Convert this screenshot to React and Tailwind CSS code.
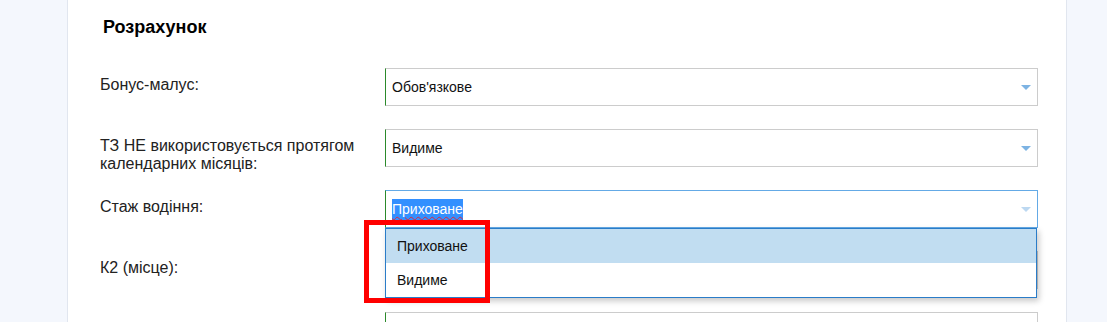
import React from 'react';

const Arrow = ({ light }) => (
  <svg width="10" height="5" viewBox="0 0 10 5" className="shrink-0">
    <path d="M0 0 H10 L5 5 Z" fill={light ? '#bcd8f1' : '#7db3e3'} />
  </svg>
);

const SelectBox = ({ value, focused, selected }) => (
  <div
    className={`flex h-[38px] w-[653px] shrink-0 items-center justify-between border border-l-[#2b8a2b] pl-[6px] pr-[6px] text-[14px] text-[#111] ${
      focused ? 'border-[#64aae6]' : 'border-[#cccccc]'
    }`}
  >
    {selected ? (
      <span className="bg-[#3390ff] text-white underline decoration-wavy decoration-[#e0283a] decoration-1 underline-offset-2">
        {value}
      </span>
    ) : (
      <span>{value}</span>
    )}
    <Arrow light={focused} />
  </div>
);

const Row = ({ label, children }) => (
  <div className="flex h-[61px] items-start">
    <div className="w-[285px] shrink-0 pt-[8px] pr-4 text-[16px] leading-[18px] text-[#222]">{label}</div>
    {children}
  </div>
);

export default function App() {
  const rows = [
    { label: 'Бонус-малус:', value: "Обов'язкове" },
    { label: 'ТЗ НЕ використовується протягом календарних місяців:', value: 'Видиме' },
    { label: 'Стаж водіння:', value: 'Приховане', focused: true, selected: true },
    { label: 'К2 (місце):', value: '' },
    { label: '', value: '' },
  ];

  return (
    <div className="flex h-[322px] w-[1107px] overflow-hidden bg-white font-['Liberation_Sans',Arial,sans-serif]">
      <div className="w-[68px] shrink-0 border-r border-[#e1e6ef] bg-[#f4f7fd]" />

      <main className="relative w-[998px] shrink-0 pl-[32px] pt-[17px]">
        <h2 className="ml-[3px] text-[18px] font-bold leading-[20px] text-black">Розрахунок</h2>

        <div className="mt-[31px]">
          {rows.map((r, i) => (
            <Row key={i} label={r.label}>
              <SelectBox value={r.value} focused={r.focused} selected={r.selected} />
            </Row>
          ))}
        </div>

        {/* open dropdown */}
        <div className="absolute left-[317px] top-[228px] w-[652px] border border-[#2a7cc8] bg-white text-[14px] text-[#111] shadow-[2px_3px_6px_rgba(0,0,0,0.22)]">
          <div className="flex h-[34px] items-center bg-[#c1ddf1] pl-[11px]">Приховане</div>
          <div className="flex h-[34px] items-center pl-[11px]">Видиме</div>
        </div>

        {/* annotation */}
        <div className="absolute left-[296px] top-[220px] h-[83px] w-[126px] border-[5px] border-[#ff0000]" />
      </main>

      <div className="flex-1 border-l border-[#e1e6ef] bg-[#f4f7fd]" />
    </div>
  );
}
